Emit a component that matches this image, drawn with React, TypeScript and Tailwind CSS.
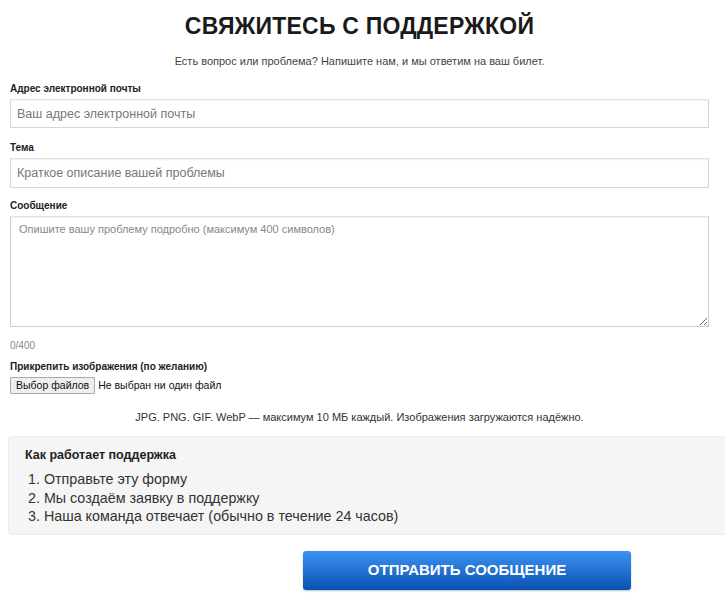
import { useState } from 'react'

const font = { fontFamily: '"Liberation Sans", Arial, sans-serif' }

export default function App() {
  const [message, setMessage] = useState('')

  return (
    <div className="min-h-screen w-full overflow-x-hidden bg-white text-[#222]" style={font}>
      <div className="pl-[10px] pr-[16px] pt-[12px]">
        {/* Заголовок */}
        <h1 className="text-center text-[23px] leading-[28px] font-bold tracking-[0.2px] text-[#1a1a1a]">
          СВЯЖИТЕСЬ С ПОДДЕРЖКОЙ
        </h1>
        <p className="mt-[14px] text-center text-[11px] leading-[14px] text-[#444]">
          Есть вопрос или проблема? Напишите нам, и мы ответим на ваш билет.
        </p>

        <form className="mt-[15px]" onSubmit={(e) => e.preventDefault()}>
          <label className="block text-[10px] leading-[12px] font-bold text-[#222]">Адрес электронной почты</label>
          <input
            type="email"
            placeholder="Ваш адрес электронной почты"
            className="mt-[4px] block h-[29px] w-full border border-[#d6d6d6] border-t-[#e2e2e2] shadow-[inset_0_1px_2px_rgba(0,0,0,0.06)] px-[6px] text-[12.5px] text-[#333] placeholder:text-[#777] outline-none"
          />

          <label className="mt-[14px] block text-[10px] leading-[12px] font-bold text-[#222]">Тема</label>
          <input
            type="text"
            placeholder="Краткое описание вашей проблемы"
            className="mt-[4px] block h-[30px] w-full border border-[#d6d6d6] border-t-[#e2e2e2] shadow-[inset_0_1px_2px_rgba(0,0,0,0.06)] px-[6px] text-[12.5px] text-[#333] placeholder:text-[#777] outline-none"
          />

          <label className="mt-[12px] block text-[10px] leading-[12px] font-bold text-[#222]">Сообщение</label>
          <textarea
            value={message}
            maxLength={400}
            onChange={(e) => setMessage(e.target.value)}
            placeholder="Опишите вашу проблему подробно (максимум 400 символов)"
            className="mt-[4px] block h-[111px] w-full border border-[#cfcfcf] border-t-[#e2e2e2] shadow-[inset_0_1px_2px_rgba(0,0,0,0.06)] px-[8px] py-[5px] text-[11px] leading-[14px] text-[#333] placeholder:text-[#888] outline-none"
          />
          <div className="mt-[13px] text-[10px] leading-[12px] text-[#888]">{message.length}/400</div>

          <label className="mt-[9px] block text-[10px] leading-[12px] font-bold text-[#222]">
            Прикрепить изображения (по желанию)
          </label>
          <div className="mt-[4px] flex items-center gap-[3px]">
            <span className="inline-flex h-[17px] items-center border border-[#a8a8a8] bg-[#efefef] px-[5px] text-[10.5px] text-[#111] rounded-[1px]">
              Выбор файлов
            </span>
            <span className="text-[10.5px] text-[#111]">Не выбран ни один файл</span>
          </div>

          <p className="mt-[16px] text-center text-[11px] leading-[14px] text-[#333]">
            JPG. PNG. GIF. WebP — максимум 10 МБ каждый. Изображения загружаются надёжно.
          </p>

          {/* Как работает поддержка */}
          <div className="mt-[12px] ml-[-2px] mr-[-30px] rounded-[4px] border border-[#ececec] bg-[#f5f5f5] pl-[16px] pt-[10px] pb-[8px]">
            <h3 className="text-[12.5px] leading-[16px] font-bold text-[#222]">Как работает поддержка</h3>
            <ol className="mt-[7px] pl-[3px] text-[14.3px] leading-[18.5px] text-[#333]">
              <li>1. Отправьте эту форму</li>
              <li>2. Мы создаём заявку в поддержку</li>
              <li>3. Наша команда отвечает (обычно в течение 24 часов)</li>
            </ol>
          </div>

          <div className="mt-[16px] flex pl-[293px]">
            <button
              type="submit"
              className="h-[39px] w-[328px] rounded-[3px] bg-gradient-to-b from-[#3d93f3] to-[#0851b2] text-[15px] font-bold text-white shadow-[0_1px_2px_rgba(0,0,0,0.25)]"
            >
              ОТПРАВИТЬ СООБЩЕНИЕ
            </button>
          </div>
        </form>
      </div>
    </div>
  )
}
